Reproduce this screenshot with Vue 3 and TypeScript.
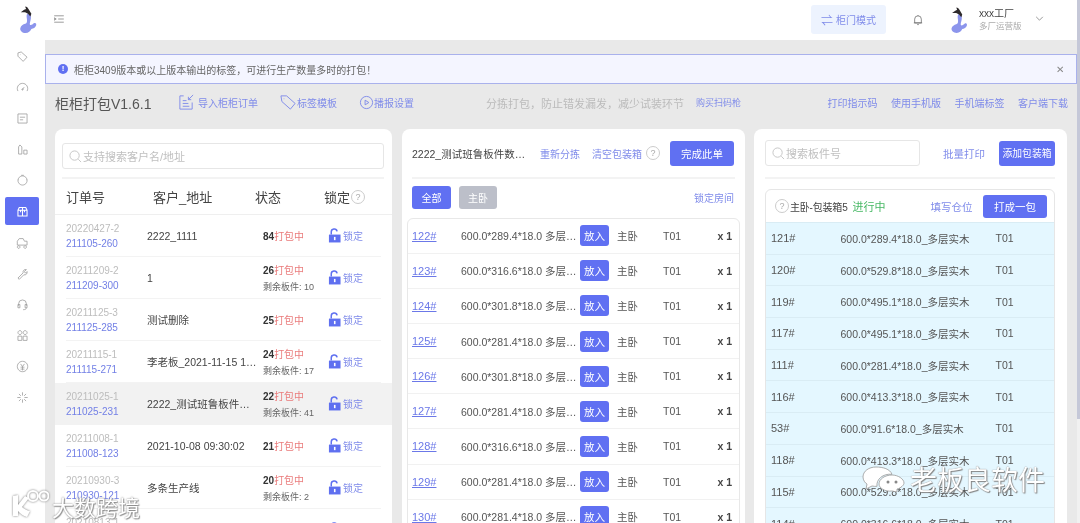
<script setup lang="ts">
interface Order { no: string; sub: string; name: string; count: number; left?: number; active?: boolean }
const navIcons: string[] = [
  'M3 4.500 8 3l9 8-6 6.500-8-8zM6.500 7h.5',
  'M3 15.500a8 8 0 1 1 14 0M10 13l2.500-3.500M9 13a1 1 0 1 0 2 0 1 1 0 1 0-2 0',
  'M3 3h14v14H3zM6 8h8M6 12h5',
  'M4 17V6l2-3 3 3v11zM12 17v-6h5v6z',
  'M10 3a7 7 0 1 0 .1 0M8 2h4M3 9h1M16 9h1',
  'M3 8h14v9H3zM3 8l2-4h10l2 4M10 4v13M7 8v3M13 8v3',
  'M2 8l3-4h6l2 4h4v6H2zM4 15a2 2 0 1 0 .1 0M14 15a2 2 0 1 0 .1 0',
  'M3 17l8-8a4 4 0 0 1 5-5l-3 3 1.500 2.500L17 7a4 4 0 0 1-5 5l-7 7z',
  'M4 12V9a6 6 0 0 1 12 0v3M3 10h3v5H3zM14 10h3v5h-3zM16 15c0 2-2 3-5 3',
  'M6 2.500a3 3 0 1 0 .1 0M14 2.500a3 3 0 1 0 .1 0M3 11h6v6.500H3zM11 11h6v6.500h-6z',
  'M10 2a8 8 0 1 0 .1 0M7 6l3 4 3-4M7 11h6M7 14h6M10 10v6',
  'M10 2v5M10 13v5M2 10h5M13 10h5M4.500 4.500l3 3M12.500 12.500l3 3M15.500 4.500l-3 3M7.500 12.500l-3 3',
]
const activeNav = 5
const orders: Order[] = [
  { no: '20220427-2', sub: '211105-260', name: '2222_1111', count: 84 },
  { no: '20211209-2', sub: '211209-300', name: '1', count: 26, left: 10 },
  { no: '20211125-3', sub: '211125-285', name: '测试删除', count: 25 },
  { no: '20211115-1', sub: '211115-271', name: '李老板_2021-11-15 16:30:22', count: 24, left: 17 },
  { no: '20211025-1', sub: '211025-231', name: '2222_测试班鲁板件数量测试', count: 22, left: 41, active: true },
  { no: '20211008-1', sub: '211008-123', name: '2021-10-08 09:30:02', count: 21 },
  { no: '20210930-3', sub: '210930-121', name: '多条生产线', count: 20, left: 2 },
  { no: '20210813-1', sub: '210813-101', name: '测试订单', count: 19 },
]
const parts: [string, string][] = [
  ['122#', '600.0*289.4*18.0 多层实木'], ['123#', '600.0*316.6*18.0 多层实木'], ['124#', '600.0*301.8*18.0 多层实木'],
  ['125#', '600.0*281.4*18.0 多层实木'], ['126#', '600.0*301.8*18.0 多层实木'], ['127#', '600.0*281.4*18.0 多层实木'],
  ['128#', '600.0*316.6*18.0 多层实木'], ['129#', '600.0*281.4*18.0 多层实木'], ['130#', '600.0*281.4*18.0 多层实木'],
]
const packed: [string, string][] = [
  ['121#', '600.0*289.4*18.0_多层实木'], ['120#', '600.0*529.8*18.0_多层实木'], ['119#', '600.0*495.1*18.0_多层实木'],
  ['117#', '600.0*495.1*18.0_多层实木'], ['111#', '600.0*281.4*18.0_多层实木'], ['116#', '600.0*413.3*18.0_多层实木'],
  ['53#', '600.0*91.6*18.0_多层实木'], ['118#', '600.0*413.3*18.0_多层实木'], ['115#', '600.0*529.8*18.0_多层实木'],
  ['114#', '600.0*316.6*18.0_多层实木'],
]
</script>

<template>
  <div class="app">
    <svg class="defs" width="0" height="0">
      <symbol id="logo" viewBox="0 0 20 28">
        <path d="M9 8c3-.5 4.500 2 4 5-.5 3-1.500 5-1 6.500 1 1 3-.5 4-1.500 1.500-1 3 0 2.500 2-.8 2.500-3 3.500-5 3.800C12.500 26 10.500 28 7.500 28 4 28 1.500 25.500 2 23c.5-2.500 3-4 5-4.500 1.500-.5 2-1.500 2-3.500 0-2.500-1-4.500 0-7z" fill="#8c95ec"/>
        <path d="M7 0.500l2 .5 1.500 2 3 5-1 3-2.500-3-3-1.500-4.500 0 3.500-2.500 2-1z" fill="#2e2a2c"/>
      </symbol>
      <symbol id="lock" viewBox="0 0 14 16">
        <path d="M1 7h12.500v8.500H1z" fill="#5f70f0"/>
        <path d="M3.500 7V4.500a3.200 3.200 0 0 1 6.300-1" fill="none" stroke="#5f70f0" stroke-width="1.600"/>
        <rect x="6.400" y="9.500" width="1.700" height="3.500" fill="#fff"/>
      </symbol>
    </svg>

    <aside class="side">
      <svg class="side-logo"><use href="#logo"/></svg>
      <nav class="nav">
        <div v-for="(d, i) in navIcons" :key="i" class="nav-item" :class="{ on: i === activeNav }">
          <svg viewBox="0 0 20 20" class="nav-icon"><path :d="d"/></svg>
        </div>
      </nav>
    </aside>

    <div class="main">
      <header class="top">
        <svg class="fold" viewBox="0 0 12 10"><path d="M0 1h12M5 5h7M0 9h12M0 3.500 2.500 5 0 6.500z"/></svg>
        <div class="mode"><span class="mode-ic">⇌</span> 柜门模式</div>
        <svg class="bell" viewBox="0 0 12 14"><path d="M2 10.500V6a4 4 0 0 1 8 0v4.500zM1 10.500h10M5 12.500h2M6 1v1"/></svg>
        <svg class="avatar"><use href="#logo"/></svg>
        <div class="user"><div class="uname">xxx工厂</div><div class="urole">多厂运营版</div></div>
        <svg class="chev" viewBox="0 0 10 6"><path d="M1 1l4 4 4-4"/></svg>
      </header>

      <div class="content">
        <div class="alert">
          <span class="alert-dot">!</span>
          <span class="alert-text">柜柜3409版本或以上版本输出的标签，可进行生产数量多时的打包！</span>
          <span class="alert-x">✕</span>
        </div>

        <div class="tools">
          <h1 class="title">柜柜打包V1.6.1</h1>
          <a class="tool first">
            <svg class="tool-ic big" viewBox="0 0 18 18"><path d="M6 2H2v14h13V9M5 7h4M5 10h6M5 13h7M16 1l-5 5M11 3v3h3"/></svg>导入柜柜订单
          </a>
          <a class="tool second">
            <svg class="tool-ic big" viewBox="0 0 18 18"><path d="M1 2h6l9 8-5 6-9-8zM4 5h.5"/></svg>标签模板
          </a>
          <a class="tool third">
            <svg class="tool-ic" viewBox="0 0 16 16"><circle cx="8" cy="8" r="6.500"/><path d="M6.500 5.500 10.500 8l-4 2.500z"/></svg>播报设置
          </a>
          <span class="slogan">分拣打包，防止错发漏发，减少试装环节</span>
          <a class="buy">购买扫码枪</a>
          <div class="tool-right"><a>打印指示码</a><a>使用手机版</a><a>手机端标签</a><a>客户端下载</a></div>
        </div>

        <div class="panels">
          <section class="panel p-left">
            <div class="search wide">
              <svg class="search-ic" viewBox="0 0 14 14"><circle cx="6" cy="6" r="5"/><path d="M10 10l3 3"/></svg>
              <span>支持搜索客户名/地址</span>
            </div>
            <div class="sep left-sep"></div>
            <div class="thead">
              <span class="c-no">订单号</span><span class="c-name">客户_地址</span><span class="c-st">状态</span>
              <span class="c-lock">锁定<i class="q">?</i></span>
            </div>
            <div class="orders">
              <div v-for="o in orders" :key="o.no" class="order" :class="{ sel: o.active }">
                <div class="order-in">
                  <div class="c-no"><div class="no">{{ o.no }}</div><div class="sub">{{ o.sub }}</div></div>
                  <div class="c-name cust">{{ o.name }}</div>
                  <div class="c-st">
                    <div><b>{{ o.count }}</b><span class="red">打包中</span></div>
                    <div v-if="o.left" class="remain">剩余板件: {{ o.left }}</div>
                  </div>
                  <div class="c-lock locker"><svg class="lock"><use href="#lock"/></svg><span>锁定</span></div>
                </div>
              </div>
            </div>
          </section>

          <section class="panel p-mid">
            <div class="mid-head">
              <span class="mid-title">2222_测试班鲁板件数量测试</span>
              <a class="l1">重新分拣</a><a class="l2">清空包装箱</a><i class="q big-q">?</i>
              <button class="btn finish">完成此单</button>
            </div>
            <div class="sep mid-sep"></div>
            <div class="filters">
              <button class="btn f-on">全部</button><button class="btn f-off">主卧</button>
              <a class="room">锁定房间</a>
            </div>
            <div class="box">
              <div v-for="p in parts" :key="p[0]" class="part">
                <a class="pno">{{ p[0] }}</a>
                <span class="pname">{{ p[1] }}</span>
                <button class="btn put">放入</button>
                <span class="proom">主卧</span>
                <span class="pcab">T01</span>
                <b class="pqty">x 1</b>
              </div>
            </div>
          </section>

          <section class="panel p-right">
            <div class="right-head">
              <div class="search narrow">
                <svg class="search-ic" viewBox="0 0 14 14"><circle cx="6" cy="6" r="5"/><path d="M10 10l3 3"/></svg>
                <span>搜索板件号</span>
              </div>
              <a class="batch">批量打印</a>
              <button class="btn add">添加包装箱</button>
            </div>
            <div class="sep right-sep"></div>
            <div class="pack">
              <div class="pack-head">
                <i class="q big-q first-q">?</i><span class="pack-name">主卧-包装箱5</span><span class="going">进行中</span>
                <a class="fill">填写仓位</a>
                <button class="btn one">打成一包</button>
              </div>
              <div v-for="p in packed" :key="p[0]" class="prow">
                <span class="r-no">{{ p[0] }}</span><span class="r-name">{{ p[1] }}</span><span>T01</span>
              </div>
            </div>
          </section>
        </div>
      </div>
    </div>

    <div class="scroll"><div class="thumb"></div></div>

    <div class="wm-a">
      <svg class="wm-icon" viewBox="0 0 44 26">
        <path d="M14 1C7 1 1 5 1 11c0 3 2 6 4 7l-1 5 6-3c2 .4 3 .4 5 .3-1-7 6-13 15-12C28 3 21 1 14 1z" fill="#fff" stroke="#999" stroke-width=".8"/>
        <path d="M30 9c-7 0-13 4-13 9 0 4 6 8 13 7l5 1v-3c4-1 7-4 7-6 0-4-6-8-12-8z" fill="#fff" stroke="#999" stroke-width=".8"/>
        <circle cx="26" cy="16" r="1.500" fill="#888"/><circle cx="34" cy="16" r="1.500" fill="#888"/>
      </svg>
      <span>老板良软件</span>
    </div>
    <div class="wm-b">
      <svg class="k100" viewBox="0 0 40 32">
        <path d="M4 6l5-1v10l7-9 4 2-7 9c2 2 6 4 8 4l-3 6c-4-1-7-4-9-6v5H4z" fill="#fff"/>
        <circle cx="24" cy="6" r="5" fill="none" stroke="#fff" stroke-width="2"/>
        <circle cx="35" cy="6" r="4.500" fill="none" stroke="#fff" stroke-width="2"/>
      </svg>
      <span>大数跨境</span>
    </div>
  </div>
</template>

<style>
html, body { margin: 0; overflow: hidden; }
</style>

<style scoped>
.app {
  --p: #6070f2; --link: #7f8bea;
  position: relative; display: flex; width: 1080px; height: 523px; overflow: hidden;
  background: #e9e9e9; color: #444;
  font: 10px "Liberation Sans", "Noto Sans CJK SC", sans-serif;
  filter: blur(.35px);
}
.defs { position: absolute; }
a { color: var(--link); }
i { font-style: normal; }
svg { flex: none; }
.side { width: 45px; flex: none; background: #fff; display: flex; flex-direction: column; align-items: center; }
.side-logo { width: 20px; height: 27px; margin: 6px 0 0 10px; }
.nav { width: 100%; margin-top: 9px; display: flex; flex-direction: column; gap: 3px; }
.nav-item { height: 28px; margin: 0 6px 0 5px; border-radius: 2px; display: flex; align-items: center; justify-content: center; }
.nav-item.on { background: var(--p); }
.nav-icon { width: 13px; height: 13px; fill: none; stroke: #9a9a9a; stroke-width: 1.200; }
.nav-item.on .nav-icon { stroke: #fff; stroke-width: 1.600; }

.main { flex: 1; min-width: 0; display: flex; flex-direction: column; }
.top { height: 40px; flex: none; background: #fff; display: flex; align-items: center; padding-left: 9px; }
.fold { width: 10px; height: 8px; margin-top: -2px; fill: none; stroke: #777; stroke-width: .9; }
.mode { margin-left: 747px; width: 75px; height: 29px; background: #edf3fe; border-radius: 3px; color: #7f8bea; display: flex; align-items: center; justify-content: center; gap: 3px; margin-top: -1px; }
.mode-ic { font-size: 12px; }
.bell { width: 10px; height: 12px; margin-left: 27px; fill: none; stroke: #666; stroke-width: .9; }
.avatar { width: 20px; height: 26px; margin-left: 26px; }
.user { margin-left: 10px; }
.uname { font-size: 10px; color: #444; line-height: 13px; }
.urole { font-size: 8.500px; color: #aaa; line-height: 13px; }
.chev { width: 9px; height: 5px; margin-left: 13px; margin-top: -3px; fill: none; stroke: #777; stroke-width: .9; }

.content { flex: 1; min-height: 0; display: flex; flex-direction: column; padding-top: 14px; }
.alert { height: 28px; margin-right: 3px; flex: none; background: #f4f5ff; border: 1px solid #a9b1ec; display: flex; align-items: center; padding: 0 12px; color: #666; }
.alert-dot { width: 10px; height: 10px; border-radius: 50%; background: var(--p); color: #fff; font-size: 8px; font-weight: bold; line-height: 10px; text-align: center; }
.alert-text { margin-left: 6px; }
.alert-x { margin-left: auto; color: #888; font-size: 10px; }

.tools { height: 37px; padding: 0 12px 8px 10px; flex: none; display: flex; align-items: center; }
.title { margin: 0; font-size: 14px; font-weight: normal; color: #555; width: 123px; flex: none; }
.tool { display: flex; align-items: center; gap: 3px; }
.tool.second { margin-left: 22px; gap: 0; }
.tool.third { margin-left: 22px; gap: 0; }
.tool-ic { width: 15px; height: 15px; fill: none; stroke: var(--link); stroke-width: 1; }
.tool-ic.big { width: 17px; height: 17px; }
.slogan { margin-left: 72px; font-size: 11px; color: #bbb; }
.buy { margin-left: 12px; font-size: 9px; }
.tool-right { margin-left: auto; display: flex; gap: 13.500px; }

.panels { flex: 1; min-height: 0; display: flex; padding: 0 13px 0 10px; gap: 10px; }
.panel { background: #fff; border-radius: 8px 8px 0 0; min-width: 0; position: relative; }
.p-left { width: 337px; flex: none; }
.p-mid { width: 343px; flex: none; margin-right: -1px; }
.p-right { width: 313px; flex: none; }
.sep { height: 2px; background: #f3f3f3; }

.search { height: 24px; border: 1px solid #e6e6e6; border-radius: 3px; display: flex; align-items: center; color: #c0c0c0; font-size: 11px; gap: 1px; padding-left: 6px; }
.search.wide { margin: 14px 8px 0 7px; }
.search.narrow { width: 147px; }
.search-ic { width: 13px; height: 13px; fill: none; stroke: #c4c4c4; stroke-width: 1; }
.left-sep { margin: 8px 8px 0 7px; }
.thead { height: 35px; display: flex; align-items: center; padding-left: 11px; font-size: 13px; color: #444; border-bottom: 1px solid #efefef; }
.c-no { width: 81px; flex: none; }
.c-name { width: 116px; flex: none; }
.c-st { width: 65px; flex: none; }
.c-lock { flex: 1; display: flex; align-items: center; }
.thead .c-no { width: 87px; }
.thead .c-name { width: 102px; }
.thead .c-st { width: 69px; }
.q { width: 14px; height: 14px; border: 1px solid #ccc; border-radius: 50%; color: #aaa; font-size: 9px; line-height: 12px; text-align: center; box-sizing: border-box; display: inline-block; margin-left: 1px; }
.orders { height: 400px; }
.order { height: 42px; padding: 0 11px; }
.order.sel { background: #f2f2f2; }
.order-in { height: 100%; display: flex; align-items: center; border-bottom: 1px solid #f3f3f3; box-sizing: border-box; }
.sel .order-in { border-bottom-color: transparent; }
.no { color: #bdbdbd; line-height: 15px; }
.sub { color: #7380e6; line-height: 15px; }
.cust { font-size: 10.500px; white-space: nowrap; overflow: hidden; text-overflow: ellipsis; width: 110px; margin-right: 6px; }
.red { color: #ea7c7c; }
.c-st b { color: #333; }
.remain { font-size: 9px; color: #666; margin-top: 3px; }
.locker { color: var(--link); gap: 2px; }
.lock { width: 13px; height: 15px; }

.mid-head { height: 48px; display: flex; align-items: center; padding: 0 11px 0 10px; box-sizing: border-box; }
.mid-title { width: 114px; flex: none; font-size: 10.500px; white-space: nowrap; overflow: hidden; text-overflow: ellipsis; color: #444; }
.l1 { margin-left: 14px; }
.l2 { margin-left: 12px; }
.big-q { margin-left: 4px; }
.btn { border: 0; padding: 0; color: #fff; background: var(--p); border-radius: 3px; font: inherit; }
.finish { width: 64px; height: 25px; margin-left: auto; font-size: 10.500px; }
.mid-sep { margin: 0 10px; }
.filters { height: 23px; margin-top: 7px; padding: 0 11px 0 10px; display: flex; align-items: center; gap: 8px; }
.f-on { width: 39px; height: 23px; }
.f-off { width: 38px; height: 23px; background: #bcbfc9; }
.room { margin-left: auto; }
.box { margin: 9px 5px 0; border: 1px solid #e8e8e8; border-radius: 6px 6px 0 0; }
.part { height: 35.150px; display: flex; align-items: center; padding: 0 7px 0 4px; border-bottom: 1px solid #f1f1f1; box-sizing: border-box; font-size: 10.500px; color: #555; }
.part:first-child { height: 34.700px; }
.pno { width: 49px; flex: none; font-size: 11px; text-decoration: underline; color: #6b78e8; }
.pname { width: 116px; flex: none; white-space: nowrap; overflow: hidden; text-overflow: ellipsis; margin-right: 3px; }
.put { width: 29px; height: 21px; flex: none; font-size: 10.500px; }
.proom { margin-left: 8px; width: 46px; flex: none; }
.pcab { flex: 1; }
.pqty { color: #444; }

.right-head { height: 48px; display: flex; align-items: center; padding: 0 12px 0 11px; }
.batch { margin-left: 23px; font-size: 10.500px; }
.add { width: 56px; height: 25px; margin-left: auto; font-size: 9.800px; white-space: nowrap; }
.right-sep { margin: 0 12px 0 11px; }
.pack { margin: 10px 12px 0 11px; border: 1px solid #e6e6e6; border-radius: 6px 6px 0 0; }
.pack-head { height: 32px; display: flex; align-items: center; padding: 0 7px 0 9px; }
.first-q { margin-left: 0; }
.pack-name { margin-left: 1px; font-size: 10px; white-space: nowrap; letter-spacing: -.2px; }
.going { color: #47b864; font-size: 11px; margin-left: 5px; }
.fill { margin-left: 45px; font-size: 10.500px; }
.one { width: 64px; height: 23px; margin-left: auto; font-size: 10.500px; }
.prow { height: 31.700px; background: #e4f7ff; border-top: 1px solid #d9ecf4; box-sizing: border-box; display: flex; align-items: center; padding-left: 5px; font-size: 10.500px; color: #555; }
.r-no { width: 69.500px; flex: none; font-size: 11px; }
.r-name { width: 155px; flex: none; }

.scroll { position: absolute; right: 0; top: 0; width: 3px; height: 523px; background: #f1f1f1; }
.thumb { height: 419px; background: #c5c8d8; }

.wm-a { position: absolute; left: 862px; top: 459px; display: flex; align-items: center; gap: 4px; color: #fff; font-size: 27px; text-shadow: 0 0 1px #666, 1px 1px 1px #888; }
.wm-icon { width: 44px; height: 26px; }
.wm-b { position: absolute; left: 9px; top: 490px; display: flex; align-items: center; gap: 3px; color: #fff; font-size: 22px; text-shadow: 0 0 2px #777, 1px 1px 1px #999; }
.k100 { width: 40px; height: 32px; filter: drop-shadow(0 0 1px #777); }
</style>
